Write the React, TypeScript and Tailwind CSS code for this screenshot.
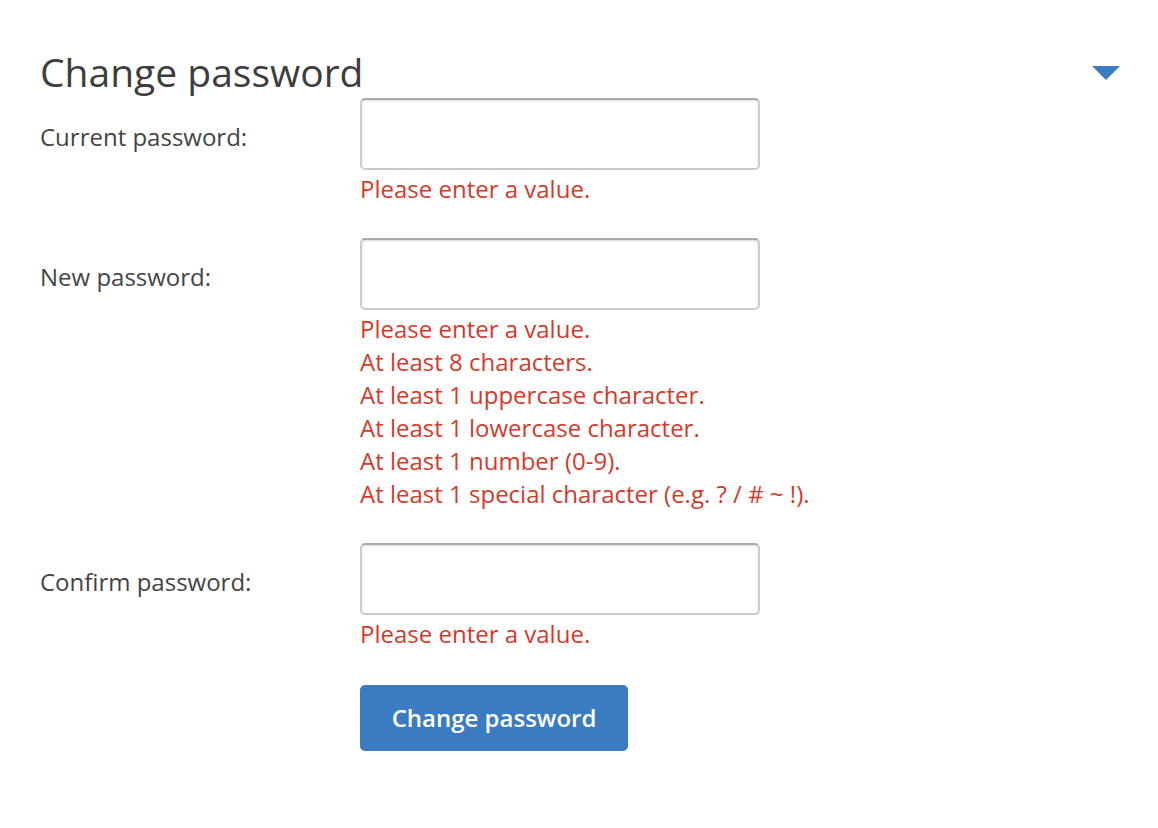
const errorsNew = [
  "Please enter a value.",
  "At least 8 characters.",
  "At least 1 uppercase character.",
  "At least 1 lowercase character.",
  "At least 1 number (0-9).",
  "At least 1 special character (e.g. ? / # ~ !).",
];

const Field = ({ label, errors }: { label: string; errors: string[] }) => {
  return (
    <div className="flex items-start">
      <label className="w-[320px] shrink-0 pt-[22px] text-[24px] leading-[33px] text-[#444]">
        {label}
      </label>
      <div className="flex flex-col">
        <input
          type="password"
          className="h-[72px] w-[400px] rounded-[5px] border-2 border-[#ccc] border-t-[#aaa] bg-white px-3 text-[24px] outline-none shadow-[inset_0_1px_2px_rgba(0,0,0,0.15)]"
        />
        <div className="mt-[2px] flex flex-col">
          {errors.map((e) => (
            <span key={e} className="text-[24px] leading-[33px] text-[#d33a2c]">
              {e}
            </span>
          ))}
        </div>
      </div>
    </div>
  );
};

export default function App() {
  return (
    <div
      className="min-h-screen w-full bg-white pl-[40px] pr-[38px] pt-[45px]"
      style={{ fontFamily: '"Open Sans", "Liberation Sans", sans-serif' }}
    >
      <div className="flex h-[53px] items-center justify-between">
        <h1 className="text-[39px] leading-[52px] text-[#3d3d3d]">Change password</h1>
        <svg width="28" height="16" viewBox="0 0 28 16" className="mb-[-2px]">
          <polygon points="0,1 28,1 14,15" fill="#3a7bc1" />
        </svg>
      </div>
      <div className="flex flex-col gap-[33px]">
        <Field label="Current password:" errors={["Please enter a value."]} />
        <Field label="New password:" errors={errorsNew} />
        <Field label="Confirm password:" errors={["Please enter a value."]} />
      </div>
      <div className="pl-[320px] pt-[35px]">
        <button className="h-[66px] w-[268px] rounded-[5px] bg-[#3a7bc1] text-[24px] font-semibold text-white">
          Change password
        </button>
      </div>
    </div>
  );
}
